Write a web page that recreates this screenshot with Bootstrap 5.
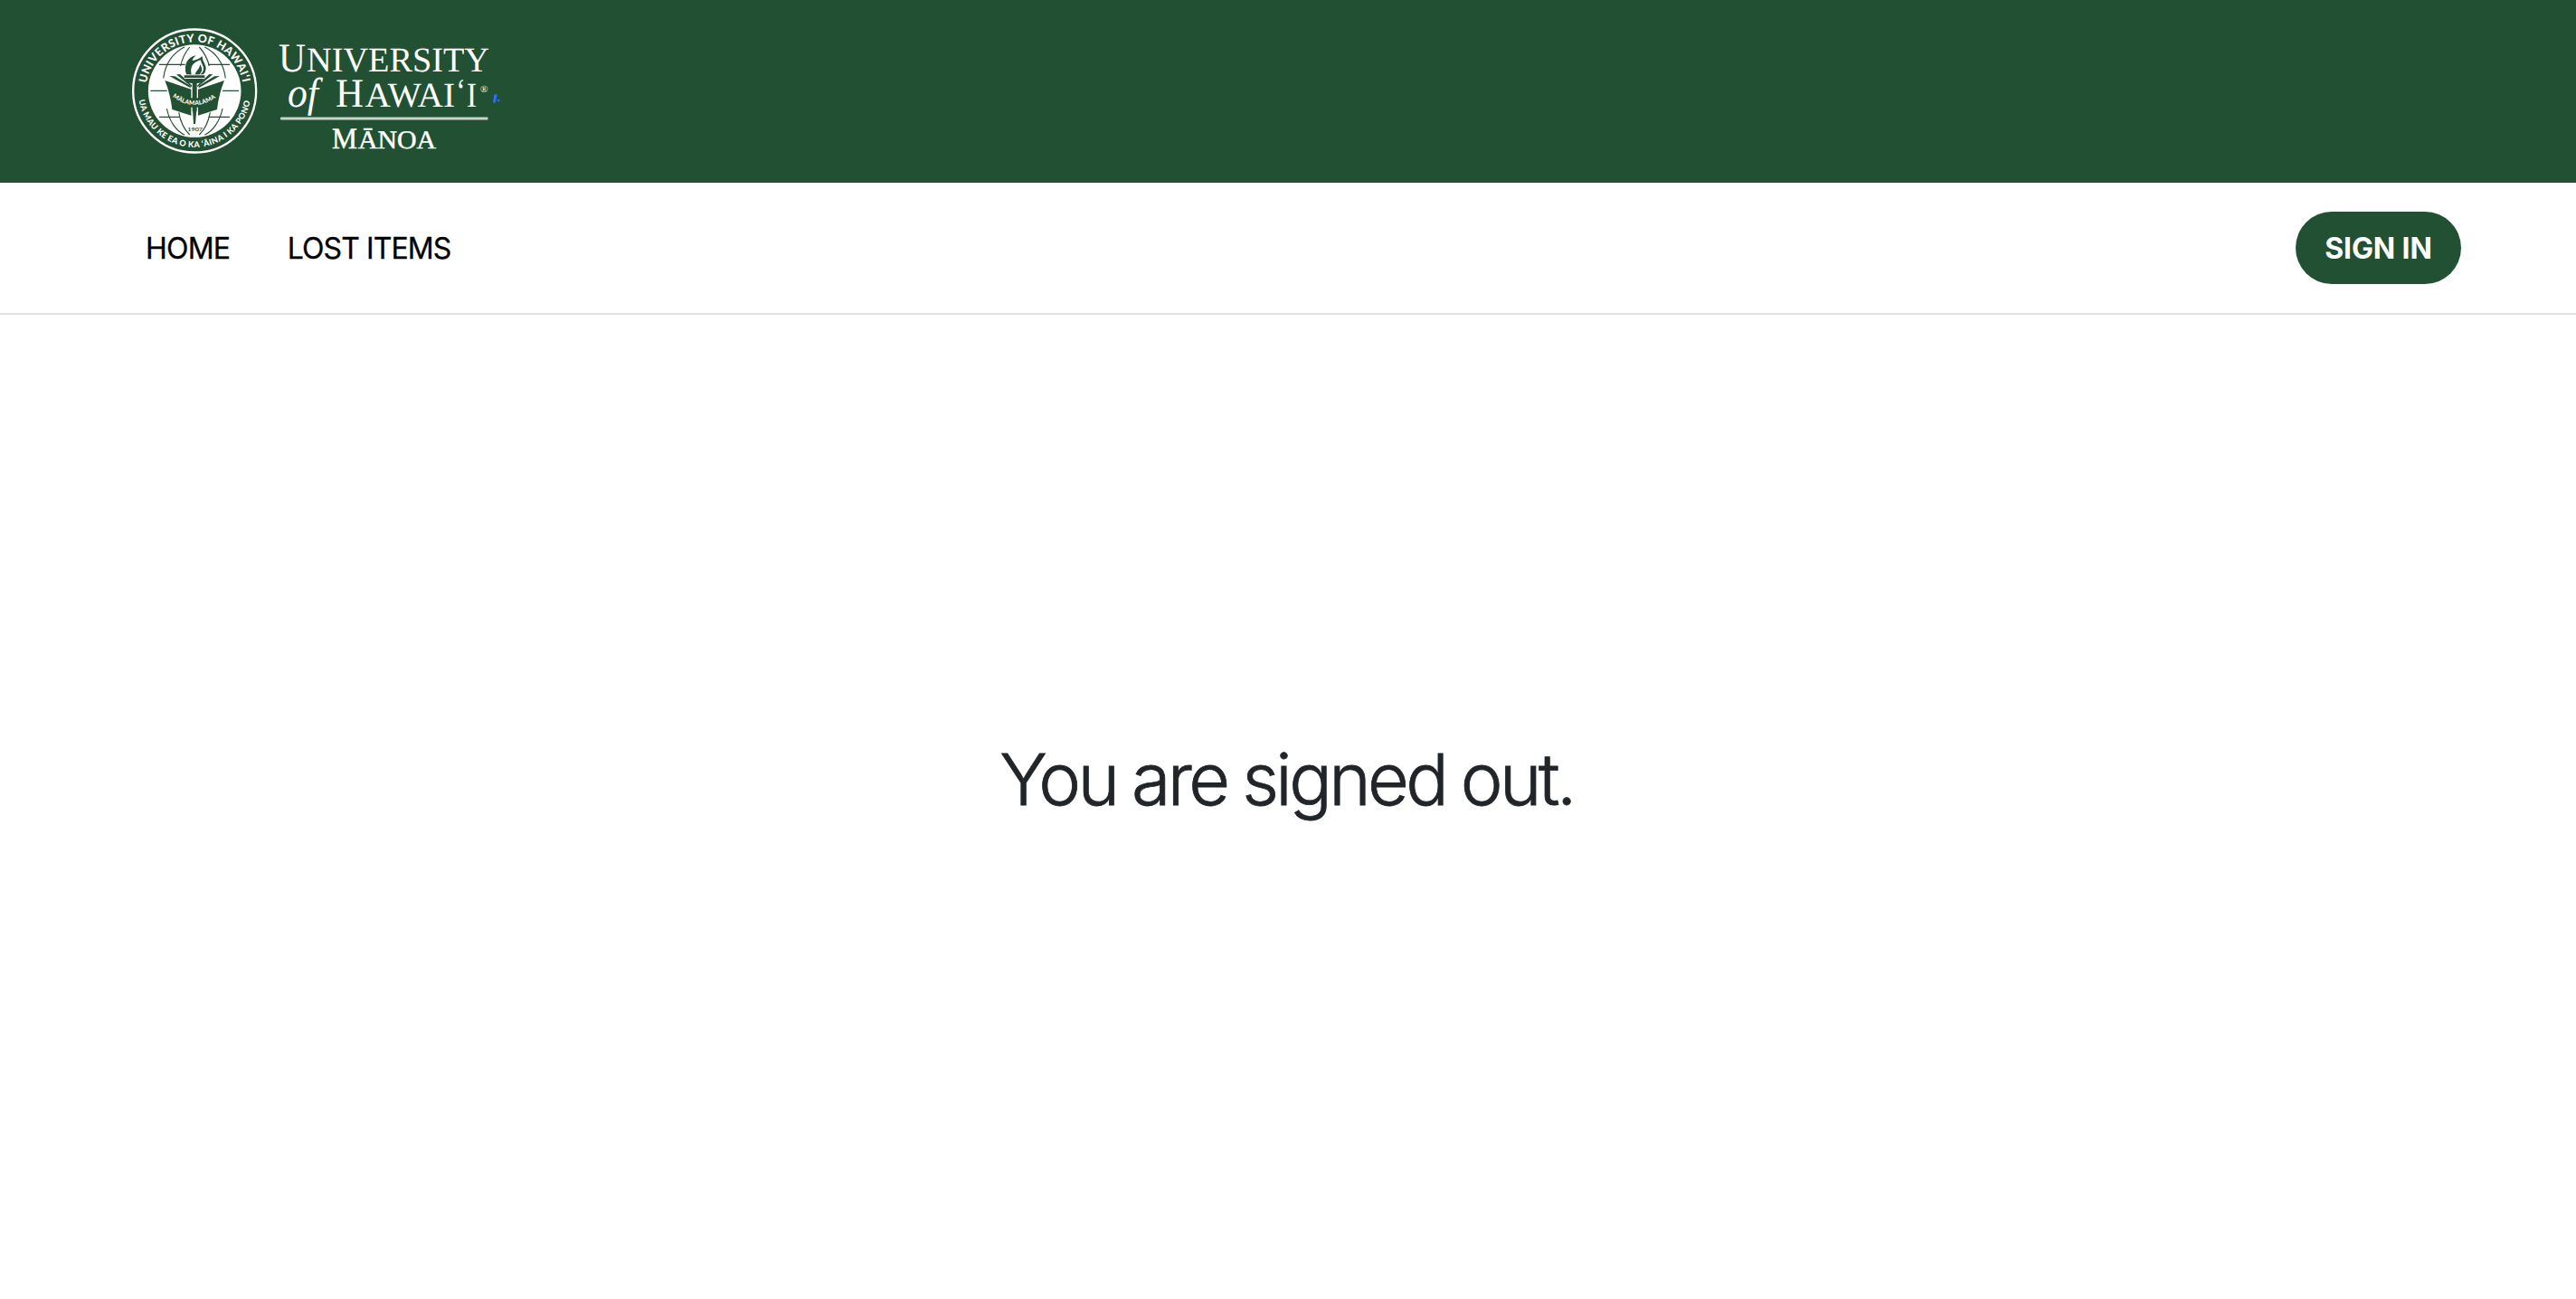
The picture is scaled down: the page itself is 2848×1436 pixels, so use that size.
<!DOCTYPE html>
<html lang="en">
<head>
<meta charset="utf-8">
<meta name="viewport" content="width=device-width, initial-scale=1">
<title>Signed out</title>
<link href="https://cdn.jsdelivr.net/npm/bootstrap@5.3.0/dist/css/bootstrap.min.css" rel="stylesheet">
<style>
  body { font-family: Inter, "Liberation Sans", sans-serif; }
  .uh-header { background: #225032; height: 202px; padding-left: 144px; }
  .uh-logo { display: block; width: 416px; height: 146px; margin-top: 28px; text-rendering: geometricPrecision; }
  .uh-nav { height: 146px; padding: 0 127px 0 161px; border-bottom: 2px solid #dee2e6; }
  .uh-nav .nav-link { font-size: 32px; line-height: 48px; color: #000; padding: 2px 0 0; -webkit-text-stroke: .3px #000; }
  .uh-links { gap: 65px; }
  .link-home { letter-spacing: -.8px; }
  .link-items { letter-spacing: -.9px; margin-left: -1.5px; }
  .btn-signin { background: #225032; color: #fff; font-size: 32px; line-height: 48px; font-weight: 700; width: 183px; height: 80px; letter-spacing: -.1px; padding: 2px 0 0; border: 0; }
  .signed-out { font-size: 79px; line-height: 96px; font-weight: 300; letter-spacing: -3.6px; word-spacing: -2px; padding-right: 3px; margin-top: 465px; color: #212529; -webkit-text-stroke: .8px #212529; }
</style>
<script src="https://cdn.jsdelivr.net/npm/bootstrap@5.3.0/dist/js/bootstrap.bundle.min.js"></script>
</head>
<body class="bg-white">
<header class="uh-header d-flex align-items-start">
  <svg class="uh-logo" viewBox="144 28 416 146" role="img">
    <!-- seal -->
    <g transform="translate(130 15) scale(.33333)">
      <circle cx="255.500" cy="256.500" r="204" fill="none" stroke="#fff" stroke-width="7"/>
      <circle cx="255.500" cy="256.500" r="154" fill="#fff"/>
      <g fill="none" stroke="#225032" stroke-width="3.500">
        <path d="M138 169H224M302 169H372M109 256H164M348 256H402M138 343H205M302 343H372"/>
        <path d="M222 111C180 132 158 170 152 214M289 111C330 132 352 170 358 214M163 315C172 358 195 390 222 402M348 315C339 358 316 390 289 402"/>
        <path d="M239 111C222 132 213 152 209 174M271 111C290 132 299 152 304 174M203 328C208 356 222 385 239 402M307 328C302 356 288 385 271 402"/>
      </g>
      <g fill="#225032">
        <path d="M157 222L244 251V338L181 318Q175 266 157 222Z"/>
        <path d="M354 222L267 251V338L330 318Q336 266 354 222Z"/>
        <path d="M243 280H268V311H243Z"/>
        <path d="M172 207L190 208L242 240V247Z"/>
        <path d="M195 202L207 201L246 238V244Z"/>
        <path d="M339 207L321 208L269 240V247Z"/>
        <path d="M316 202L304 201L265 238V244Z"/>
        <path d="M221 205H289V213H221ZM224 216H287C282 227 272 231 265 231H246C237 231 229 227 224 216Z"/>
        <path d="M248 231H263V325H248ZM249 318H262L258 366H252Z"/>
        <path d="M228 202C219 173 229 145 260 139C252 146 248 151 248 156C258 155 272 150 281 141C281 160 294 168 293 184Q292 195 284 202Z"/>
      </g>
      <path d="M241 199C236 178 250 161 276 154C277 168 287 174 285 186Q284 195 274 202H241Z" fill="#fff"/>
      <path d="M237 202C232 176 243 161 262 153L265 157C248 166 240 179 245 202ZM258 202C258 190 273 186 273 169C283 180 281 194 271 202Z" fill="#225032"/>
      <path id="motto" d="M182 276Q255 330 330 276" fill="none"/>
      <text font-family="Lato" font-weight="900" font-size="20" fill="#fff"><textPath href="#motto" textLength="155" lengthAdjust="spacing">MĀLAMALAMA</textPath></text>
      <text x="232" y="389" textLength="50" lengthAdjust="spacingAndGlyphs" font-family="Lato" font-weight="700" font-size="17" fill="#225032">1907</text>
      <path id="arcTop" d="M95.500 231A162 162 0 0 1 415.500 231" fill="none"/>
      <path id="arcBottom" d="M71 287A187 187 0 0 0 440 287" fill="none"/>
      <text font-family="Lato" font-weight="900" font-size="37" fill="#fff"><textPath href="#arcTop" textLength="455" lengthAdjust="spacing">UNIVERSITY OF HAWAIʻI</textPath></text>
      <text font-family="Lato" font-weight="900" font-size="27" fill="#fff"><textPath href="#arcBottom" textLength="522" lengthAdjust="spacing">UA MAU KE EA O KA ʻĀINA I KA PONO</textPath></text>
    </g>
    <!-- wordmark -->
    <g fill="#fff" font-family="'Liberation Serif', serif">
      <text x="308" y="79.300" font-size="45" textLength="30" lengthAdjust="spacingAndGlyphs">U</text>
      <text x="339" y="79.300" font-size="38.500" textLength="202" lengthAdjust="spacingAndGlyphs">NIVERSITY</text>
      <text x="318" y="118" font-size="46" font-style="italic" textLength="34" lengthAdjust="spacingAndGlyphs">of</text>
      <text x="371" y="118" font-size="45" textLength="31" lengthAdjust="spacingAndGlyphs">H</text>
      <text x="403.500" y="118" font-size="38.500" textLength="99.500" lengthAdjust="spacingAndGlyphs">AWAI</text>
      <text x="504.500" y="113" font-size="38" textLength="10" lengthAdjust="spacingAndGlyphs">‘</text>
      <text x="516" y="118" font-size="38.500" textLength="11" lengthAdjust="spacingAndGlyphs">I</text>
      <text x="531" y="101.500" font-size="11" textLength="8.500" lengthAdjust="spacingAndGlyphs">®</text>
      <text x="367" y="164.300" font-size="33" stroke="#fff" stroke-width=".5" textLength="28" lengthAdjust="spacingAndGlyphs">M</text>
      <text x="396" y="164.300" font-size="28.500" stroke="#fff" stroke-width=".5" textLength="86" lengthAdjust="spacingAndGlyphs">ĀNOA</text>
    </g>
    <rect x="310" y="129.600" width="229.500" height="2.800" rx="1" fill="#c8d4cc"/>
    <path d="M546.500 104.300H549.800L547.800 113.600H544.800ZM550 110H552.200V112.200H550Z" fill="#2f6dfb"/>
  </svg>
</header>
<nav class="uh-nav navbar-expand d-flex align-items-center justify-content-between">
  <div class="uh-links navbar-nav">
    <a class="nav-link link-home" href="#">HOME</a>
    <a class="nav-link link-items" href="#">LOST ITEMS</a>
  </div>
  <a class="btn btn-signin rounded-pill d-flex align-items-center justify-content-center" href="#">SIGN IN</a>
</nav>
<main class="text-center">
  <h1 class="signed-out mb-0">You are signed out.</h1>
</main>
</body>
</html>
